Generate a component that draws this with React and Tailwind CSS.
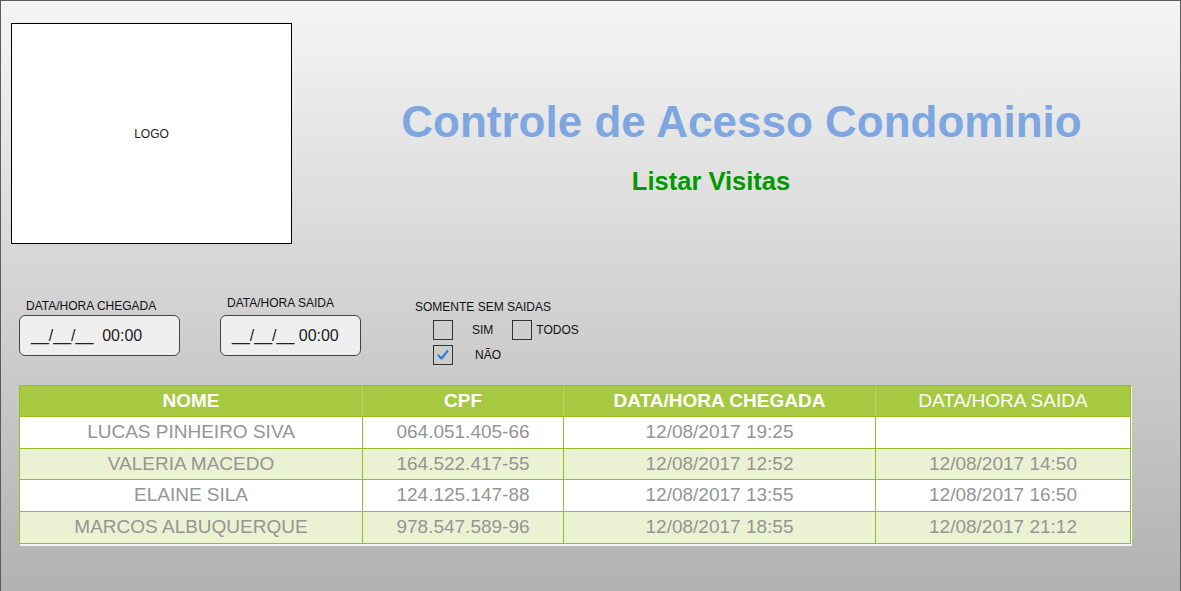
import React from "react";

const rows = [
  ["LUCAS PINHEIRO SIVA", "064.051.405-66", "12/08/2017 19:25", "", "h-[32px]"],
  ["VALERIA MACEDO", "164.522.417-55", "12/08/2017 12:52", "12/08/2017 14:50", "h-[31px]"],
  ["ELAINE SILA", "124.125.147-88", "12/08/2017 13:55", "12/08/2017 16:50", "h-[32px]"],
  ["MARCOS ALBUQUERQUE", "978.547.589-96", "12/08/2017 18:55", "12/08/2017 21:12", "h-[32px]"],
];

function Box({ checked }) {
  return (
    <div className="w-[20px] h-[20px] border border-[#333] flex items-center justify-center shrink-0">
      {checked && (
        <svg width="18" height="18" viewBox="0 0 18 18">
          <path d="M4.5 9.5 L7.5 12.5 L13.5 5" fill="none" stroke="#2a80d8" strokeWidth="2.2" strokeLinecap="round" strokeLinejoin="round" />
        </svg>
      )}
    </div>
  );
}

export default function App() {
  return (
    <div className="w-[1181px] h-[591px] border-x border-t border-[#5c5c5c] bg-gradient-to-b from-[#f5f5f5] to-[#b2b2b2] font-['Liberation_Sans',Arial,sans-serif] overflow-hidden">
      {/* top */}
      <div className="flex pt-[22px] pl-[10px]">
        <div className="w-[281px] h-[221px] border border-black bg-white flex items-center justify-center text-[12px] text-[#222]">
          LOGO
        </div>
        <div className="flex-1 flex flex-col items-center pl-[11px]">
          <div className="mt-[74px] text-[44px] leading-[50px] font-bold text-[#7ea6e0] whitespace-nowrap">
            Controle de Acesso Condominio
          </div>
          <div className="mt-[20px] mr-[61px] text-[25.5px] leading-[29px] font-bold text-[#009900]">
            Listar Visitas
          </div>
        </div>
      </div>

      {/* filters */}
      <div className="flex items-start mt-[52px] pl-[18px] text-[#111]">
        <div className="flex flex-col">
          <div className="mt-[3px] pl-[7px] text-[12px] leading-[14px]">DATA/HORA CHEGADA</div>
          <div className="mt-[2px] w-[161px] h-[41px] rounded-[6px] border border-[#444] bg-[#efefef] flex items-center pl-[11px] text-[16px] text-[#222] whitespace-pre">
            {"__/__/__  00:00"}
          </div>
        </div>
        <div className="flex flex-col ml-[40px]">
          <div className="pl-[7px] text-[12px] leading-[14px]">DATA/HORA SAIDA</div>
          <div className="mt-[5px] w-[141px] h-[41px] rounded-[6px] border border-[#444] bg-[#efefef] flex items-center pl-[11px] text-[16px] text-[#222] whitespace-pre">
            {"__/__/__ 00:00"}
          </div>
        </div>
        <div className="flex flex-col ml-[54px] text-[12px] leading-[14px]">
          <div className="mt-[4px]">SOMENTE SEM SAIDAS</div>
          <div className="mt-[6px] flex items-center pl-[18px]">
            <Box />
            <span className="ml-[19px]">SIM</span>
            <div className="ml-[19px]"><Box /></div>
            <span className="ml-[4px]">TODOS</span>
          </div>
          <div className="mt-[5px] flex items-center pl-[18px]">
            <Box checked />
            <span className="ml-[22px]">NÃO</span>
          </div>
        </div>
      </div>

      {/* table */}
      <div className="mt-[20px] ml-[18px] w-[1112px] border border-[#98bf21] shadow-[1px_2px_0_rgba(255,255,255,0.85)] text-[19px]">
        <div className="grid grid-cols-[342px_201px_312px_255px] h-[30px] bg-[#a7c942] text-white">
          <div className="flex items-center justify-center font-bold">NOME</div>
          <div className="flex items-center justify-center font-bold border-l border-[#b9d56a]">CPF</div>
          <div className="flex items-center justify-center font-bold border-l border-[#b9d56a]">DATA/HORA CHEGADA</div>
          <div className="flex items-center justify-center border-l border-[#b9d56a]">DATA/HORA SAIDA</div>
        </div>
        {rows.map((r, i) => (
          <div
            key={i}
            className={
              "grid grid-cols-[342px_201px_312px_255px] border-t border-[#98bf21] text-[#959595] " +
              r[4] +
              (i % 2 === 1 ? " bg-[#eaf2d3]" : " bg-white")
            }
          >
            <div className="flex items-center justify-center">{r[0]}</div>
            <div className="flex items-center justify-center border-l border-[#98bf21]">{r[1]}</div>
            <div className="flex items-center justify-center border-l border-[#98bf21]">{r[2]}</div>
            <div className="flex items-center justify-center border-l border-[#98bf21]">{r[3]}</div>
          </div>
        ))}
      </div>
    </div>
  );
}
